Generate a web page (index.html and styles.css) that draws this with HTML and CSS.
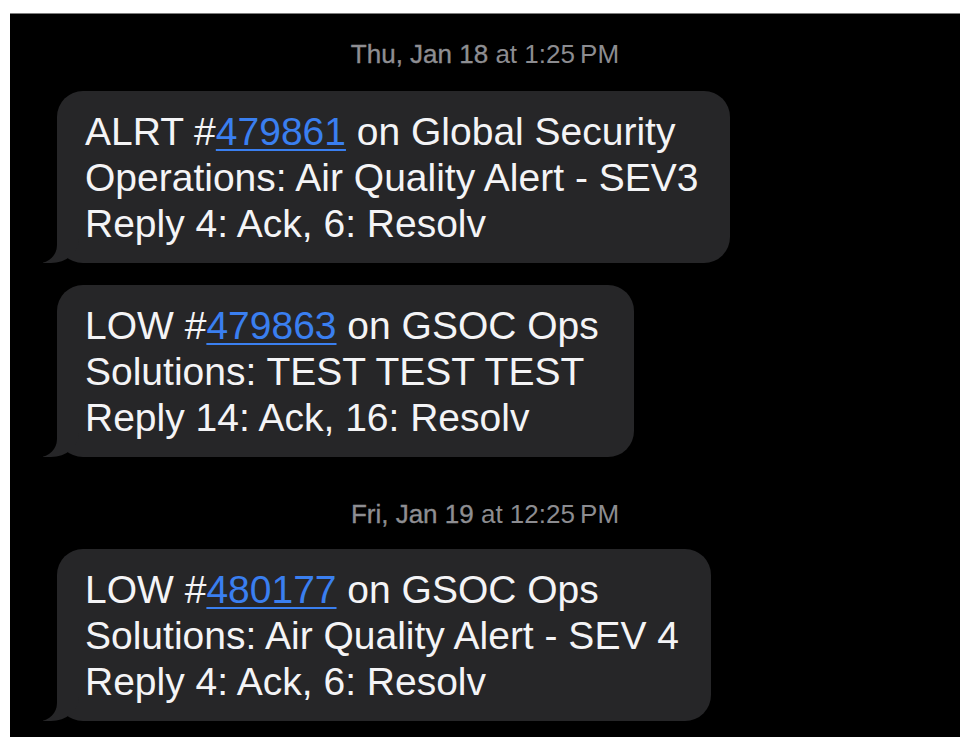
FILE: index.html
```html
<!DOCTYPE html>
<html lang="en">
<head>
<meta charset="utf-8">
<title>Messages</title>
<link rel="stylesheet" href="styles.css">
</head>
<body>
<div class="screen">
  <div class="thread">
    <div class="stamp"><span class="stamp-date">Thu, Jan 18</span> at 1:25&#8201;PM</div>
    <div class="bubble">ALRT #<a class="link" href="#">479861</a> on Global Security<br>Operations: Air Quality Alert - SEV3<br>Reply 4: Ack, 6: Resolv</div>
    <div class="bubble bubble-wide">LOW #<a class="link" href="#">479863</a> on GSOC Ops<br>Solutions: TEST TEST TEST<br>Reply 14: Ack, 16: Resolv</div>
    <div class="stamp stamp-later"><span class="stamp-date">Fri, Jan 19</span> at 12:25&#8201;PM</div>
    <div class="bubble">LOW #<a class="link" href="#">480177</a> on GSOC Ops<br>Solutions: Air Quality Alert - SEV 4<br>Reply 4: Ack, 6: Resolv</div>
  </div>
</div>
</body>
</html>
```
FILE: styles.css
```css
html, body {
  margin: 0;
  padding: 0;
  background: #ffffff;
}

.screen {
  margin: 13px 6px 0 10px;
  height: 724px;
  box-sizing: border-box;
  background: #000000;
  border-top: 1px solid #7d7d7d;
  padding-top: 25px;
  font-family: "Liberation Sans", Arial, sans-serif;
}

.thread {
  display: flex;
  flex-direction: column;
  align-items: flex-start;
  padding-left: 47px;
}

.stamp {
  align-self: stretch;
  margin-left: -47px;
  text-align: center;
  color: #8c8c90;
  font-size: 26px;
  line-height: 30px;
  margin-bottom: 22px;
}

.stamp-date {
  color: #8e8e92;
  -webkit-text-stroke: 0.35px #8e8e92;
}

.stamp-later {
  margin-top: 20px;
  margin-bottom: 20px;
}

.bubble {
  position: relative;
  background: #262628;
  color: #f4f4f6;
  font-size: 39px;
  line-height: 46px;
  padding: 18px 32px 16px 28px;
  border-radius: 26px;
  margin-bottom: 22px;
  white-space: nowrap;
}

.bubble-wide {
  padding-right: 35px;
}

.bubble::before {
  content: "";
  position: absolute;
  bottom: 0;
  left: -14px;
  width: 36px;
  height: 28px;
  background: #262628;
  border-bottom-right-radius: 28px 24px;
}

.bubble::after {
  content: "";
  position: absolute;
  bottom: 0;
  left: -36px;
  width: 36px;
  height: 28px;
  background: #000000;
  border-bottom-right-radius: 18px;
}

.link {
  color: #3a7ff0;
  text-decoration: underline;
  text-decoration-thickness: 2px;
  text-underline-offset: 4px;
}
```
